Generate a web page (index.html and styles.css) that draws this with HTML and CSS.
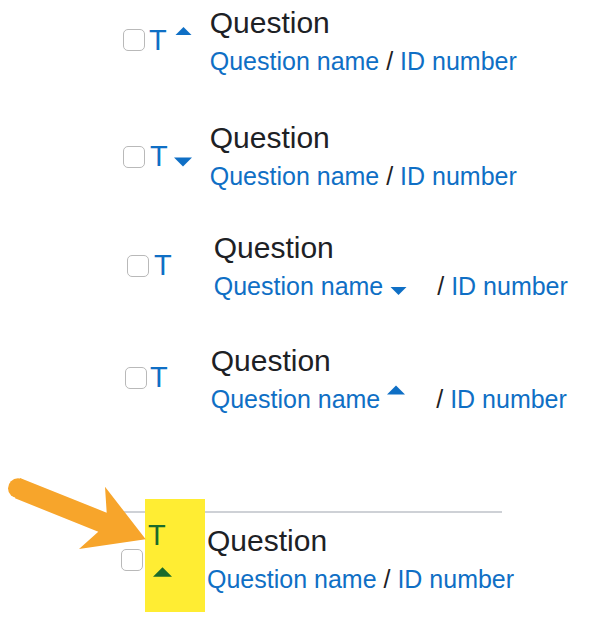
FILE: index.html
```html
<!DOCTYPE html>
<html lang="en">
<head>
    <meta charset="UTF-8">
    <meta name="viewport" content="width=device-width, initial-scale=1.0">
    <title>Question bank sorting</title>
    <link rel="stylesheet" href="styles.css">
</head>
<body>
    <div class="list">
        <!-- sorted by type, ascending -->
        <div class="row row-1">
            <span class="check"></span>
            <span class="qtype">
                <span class="qicon">T</span>
                <svg class="caret" width="19" height="8" viewBox="0 0 18 9"><polygon points="9,0 18,9 0,9"/></svg>
            </span>
            <div class="qtext">
                <div class="qtitle">Question</div>
                <div class="qlinks"><a href="#">Question name</a> / <a href="#">ID number</a></div>
            </div>
        </div>

        <!-- sorted by type, descending -->
        <div class="row row-2">
            <span class="check"></span>
            <span class="qtype">
                <span class="qicon">T</span>
                <svg class="caret" width="18" height="10" viewBox="0 0 18 9"><polygon points="0,0 18,0 9,9"/></svg>
            </span>
            <div class="qtext">
                <div class="qtitle">Question</div>
                <div class="qlinks"><a href="#">Question name</a> / <a href="#">ID number</a></div>
            </div>
        </div>

        <!-- sorted by name, descending -->
        <div class="row row-3">
            <span class="check"></span>
            <span class="qtype">
                <span class="qicon">T</span>
            </span>
            <div class="qtext">
                <div class="qtitle">Question</div>
                <div class="qlinks"><a href="#">Question name <svg class="sort" width="17" height="8" viewBox="0 0 18 9"><polygon points="0,0 18,0 9,9"/></svg></a><span class="sep">/</span> <a href="#">ID number</a></div>
            </div>
        </div>

        <!-- sorted by name, ascending -->
        <div class="row row-4">
            <span class="check"></span>
            <span class="qtype">
                <span class="qicon">T</span>
            </span>
            <div class="qtext">
                <div class="qtitle">Question</div>
                <div class="qlinks"><a href="#">Question name <svg class="sort" width="18" height="10" viewBox="0 0 18 9"><polygon points="9,0 18,9 0,9"/></svg></a><span class="sep">/</span> <a href="#">ID number</a></div>
            </div>
        </div>

        <div class="divider"></div>

        <!-- proposed: caret under the type icon -->
        <div class="row row-5">
            <span class="check"></span>
            <span class="qtype highlight">
                <span class="qicon">T</span>
                <svg class="caret" width="19" height="10" viewBox="0 0 18 9"><polygon points="9,0 18,9 0,9"/></svg>
            </span>
            <div class="qtext">
                <div class="qtitle">Question</div>
                <div class="qlinks"><a href="#">Question name</a> / <a href="#">ID number</a></div>
            </div>
        </div>
    </div>

    <svg class="arrow" width="160" height="90" viewBox="0 470 160 90">
        <circle cx="18" cy="488.3" r="10"/>
        <polygon points="20,478 106.7,512.7 105,486.7 145.7,539.3 79,549 98.3,531.7 15,498.3"/>
    </svg>
</body>
</html>
```

FILE: styles.css
```css
body {
    font-family: 'Liberation Sans', Arial, sans-serif;
    background-color: #ffffff;
    color: #1d2125;
    margin: 0;
    padding: 0;
    position: relative;
}
.list {
    padding-top: 5px;
}
.row {
    display: flex;
    align-items: flex-start;
}
.check {
    flex: none;
    width: 20px;
    height: 20px;
    border: 1.5px solid #b9b9b9;
    border-radius: 5px;
    background-color: #ffffff;
}
.qtype {
    display: flex;
    align-items: flex-start;
    flex: none;
}
.qicon {
    font-size: 29px;
    line-height: 29px;
    color: #0f6fc5;
}
.caret, .sort {
    fill: #0f6fc5;
}
.qtitle {
    font-size: 30px;
    line-height: 36px;
    margin-bottom: 5px;
}
.qlinks {
    font-size: 25px;
    line-height: 30px;
    white-space: nowrap;
}
.qlinks a {
    color: #0f6fc5;
    text-decoration: none;
}
.sort {
    display: inline-block;
}

/* row 1 */
.row-1 {
    margin-top: 0;
    padding-left: 123px;
}
.row-1 .check { margin-top: 24px; }
.row-1 .qtype { margin-left: 4px; margin-top: 21px; }
.row-1 .caret { margin-left: 7px; margin-top: 1px; }
.row-1 .qtext { margin-left: 17px; }

/* row 2 */
.row-2 {
    margin-top: 44px;
    padding-left: 123px;
}
.row-2 .check { margin-top: 26px; }
.row-2 .qtype { margin-left: 5px; margin-top: 22px; }
.row-2 .caret { margin-left: 6px; margin-top: 15px; }
.row-2 .qtext { margin-left: 18px; }

/* row 3 */
.row-3 {
    margin-top: 39px;
    padding-left: 127px;
}
.row-3 .check { margin-top: 25px; }
.row-3 .qtype { margin-left: 5px; margin-top: 21px; }
.row-3 .qtext { margin-left: 42px; }
.row-3 .qlinks { margin-top: 1px; }
.row-3 .sep { margin-left: 30px; }

/* row 4 */
.row-4 {
    margin-top: 42px;
    padding-left: 125px;
}
.row-4 .check { margin-top: 24px; }
.row-4 .qtype { margin-left: 3px; margin-top: 20px; }
.row-4 .qtext { margin-left: 43px; }
.row-4 .sort { vertical-align: 13px; }
.row-4 .sep { margin-left: 31px; }

.divider {
    margin-top: 97px;
    margin-left: 123px;
    width: 379px;
    height: 2px;
    background-color: #ced1d6;
}

/* row 5 */
.row-5 {
    padding-left: 121px;
}
.row-5 .check { margin-top: 36px; }
.highlight {
    flex-direction: column;
    width: 60px;
    height: 113px;
    margin-left: 2px;
    margin-top: -14px;
    background-color: #ffed33;
}
.highlight .qicon {
    color: #1a6b2b;
    margin-left: 3px;
    margin-top: 22px;
}
.highlight .caret {
    fill: #1a6b2b;
    margin-left: 8px;
    margin-top: 17px;
}
.row-5 .qtext { margin-left: 2px; margin-top: 10px; }

.arrow {
    position: absolute;
    left: 0;
    top: 470px;
    fill: #f7a52b;
}
```
